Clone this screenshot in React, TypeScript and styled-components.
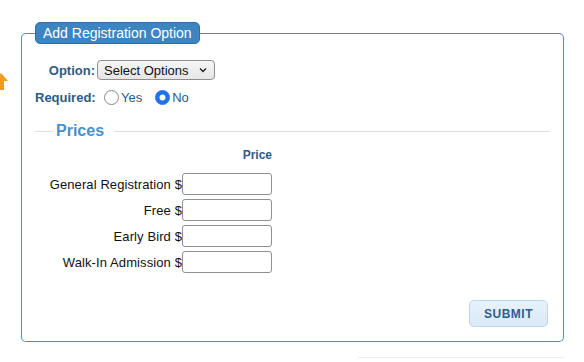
import * as React from 'react';
import styled, { createGlobalStyle } from 'styled-components';

const GlobalStyle = createGlobalStyle`
  html, body {
    margin: 0;
    padding: 0;
    background: #fff;
    font-family: 'Liberation Sans', Arial, sans-serif;
  }
`;

const Page = styled.div`
  position: relative;
  width: 584px;
  height: 362px;
  padding: 33px 0 0 21px;
  box-sizing: border-box;
  overflow: hidden;
`;

const Pointer = styled.svg`
  position: absolute;
  left: -6px;
  top: 73px;
`;

const Box = styled.section`
  width: 543px;
  padding: 0 13px 14px 13px;
  box-sizing: border-box;
  border: 1px solid #3a95d6;
  border-top-color: #7a7f86;
  border-radius: 5px;
`;

const Legend = styled.h2`
  width: fit-content;
  margin: -12px 0 0 0;
  padding: 0 7px;
  height: 22px;
  line-height: 21px;
  box-sizing: border-box;
  background: #3d85c1;
  border: 1px solid #2f6fa6;
  border-radius: 5px;
  color: #fff;
  font-size: 14px;
  font-weight: normal;
`;

const FieldRow = styled.div<{ $top: number }>`
  display: flex;
  align-items: center;
  gap: 2px;
  margin-top: ${(p) => p.$top}px;
`;

const FieldLabel = styled.label`
  width: 60px;
  text-align: right;
  font-size: 13px;
  font-weight: bold;
  color: #2c5b87;
  white-space: nowrap;
`;

const SelectWrap = styled.div`
  position: relative;
  width: 118px;
  height: 20px;
`;

const Select = styled.select`
  appearance: none;
  width: 100%;
  height: 100%;
  box-sizing: border-box;
  padding: 0 0 0 6px;
  border: 1px solid #8e8e8e;
  border-radius: 4px;
  background: linear-gradient(#f6f6f6, #e6e6e6);
  font-family: inherit;
  font-size: 13px;
  color: #111;
`;

const Chevron = styled.svg`
  position: absolute;
  right: 8px;
  top: 7px;
  pointer-events: none;
`;

const RadioGroup = styled.div`
  display: flex;
  align-items: center;
  margin-left: 7px;
`;

const RadioLabel = styled.label`
  display: flex;
  align-items: center;
  gap: 2px;
  margin-right: 13px;
  font-size: 13px;
  color: #2c5b87;
`;

const Radio = styled.input`
  appearance: none;
  width: 15px;
  height: 15px;
  margin: 0;
  box-sizing: border-box;
  border: 1px solid #8a8a8a;
  border-radius: 50%;
  background: #fff;

  &:checked {
    border-color: #1f72ea;
    background: radial-gradient(circle, #fff 0 2.6px, #1f72ea 3.4px);
  }
`;

const SectionHead = styled.div`
  display: flex;
  align-items: center;
  margin-top: 16px;
  height: 20px;

  &::before,
  &::after {
    content: '';
    height: 1px;
    background: #dcdfe3;
  }

  &::before {
    width: 18px;
    margin-right: 3px;
  }

  &::after {
    flex: 1;
    margin-left: 10px;
  }
`;

const SectionTitle = styled.span`
  font-size: 16px;
  font-weight: bold;
  color: #4a90c8;
`;

const PriceGrid = styled.div`
  display: grid;
  grid-template-columns: 147px 90px;
  row-gap: 4px;
  align-items: center;
`;

const ColHead = styled.div`
  grid-column: 2;
  text-align: right;
  font-size: 12px;
  font-weight: bold;
  color: #2c5b87;
  line-height: 14px;
  margin: 7px 0 7px;
`;

const PriceLabel = styled.label`
  text-align: right;
  font-size: 13px;
  letter-spacing: 0.1px;
  color: #111;
  white-space: nowrap;
`;

const PriceInput = styled.input`
  width: 90px;
  height: 22px;
  margin: 0;
  box-sizing: border-box;
  border: 1px solid #8f8f95;
  border-radius: 3px;
  background: #fff;
`;

const Actions = styled.div`
  display: flex;
  justify-content: flex-end;
  margin-top: 27px;
  padding-right: 2px;
`;

const SubmitButton = styled.button`
  width: 79px;
  height: 27px;
  border: 1px solid #bcd6ec;
  border-radius: 5px;
  background: linear-gradient(#e8f2fb, #d9e9f7);
  color: #2e5f8d;
  font-family: inherit;
  font-size: 12px;
  font-weight: bold;
  letter-spacing: 0.5px;
`;

const Rule = styled.div`
  width: 206px;
  height: 1px;
  margin: 15px 0 0 337px;
  background: #eeeeee;
`;

const prices = ['General Registration', 'Free', 'Early Bird', 'Walk-In Admission'];

export default function App() {
  return (
    <Page>
      <GlobalStyle />
      <Pointer width="14" height="18" viewBox="0 0 14 18">
        <path d="M7 0 L14 8 L10 8 L10 17 L4 17 L4 8 L0 8 Z" fill="#f39a1f" />
      </Pointer>
      <Box>
        <Legend>Add Registration Option</Legend>
        <FieldRow $top={16}>
          <FieldLabel>Option:</FieldLabel>
          <SelectWrap>
            <Select defaultValue="">
              <option value="">Select Options</option>
            </Select>
            <Chevron width="8" height="6" viewBox="0 0 8 6">
              <path d="M1 1.5 L4 4.5 L7 1.5" fill="none" stroke="#222" strokeWidth="1.4" />
            </Chevron>
          </SelectWrap>
        </FieldRow>
        <FieldRow $top={10}>
          <FieldLabel>Required:</FieldLabel>
          <RadioGroup>
            <RadioLabel>
              <Radio type="radio" name="required" />
              Yes
            </RadioLabel>
            <RadioLabel>
              <Radio type="radio" name="required" defaultChecked />
              No
            </RadioLabel>
          </RadioGroup>
        </FieldRow>
        <SectionHead>
          <SectionTitle>Prices</SectionTitle>
        </SectionHead>
        <PriceGrid>
          <ColHead>Price</ColHead>
          {prices.map((name) => (
            <React.Fragment key={name}>
              <PriceLabel>{name} $</PriceLabel>
              <PriceInput type="text" />
            </React.Fragment>
          ))}
        </PriceGrid>
        <Actions>
          <SubmitButton type="button">SUBMIT</SubmitButton>
        </Actions>
      </Box>
      <Rule />
    </Page>
  );
}
